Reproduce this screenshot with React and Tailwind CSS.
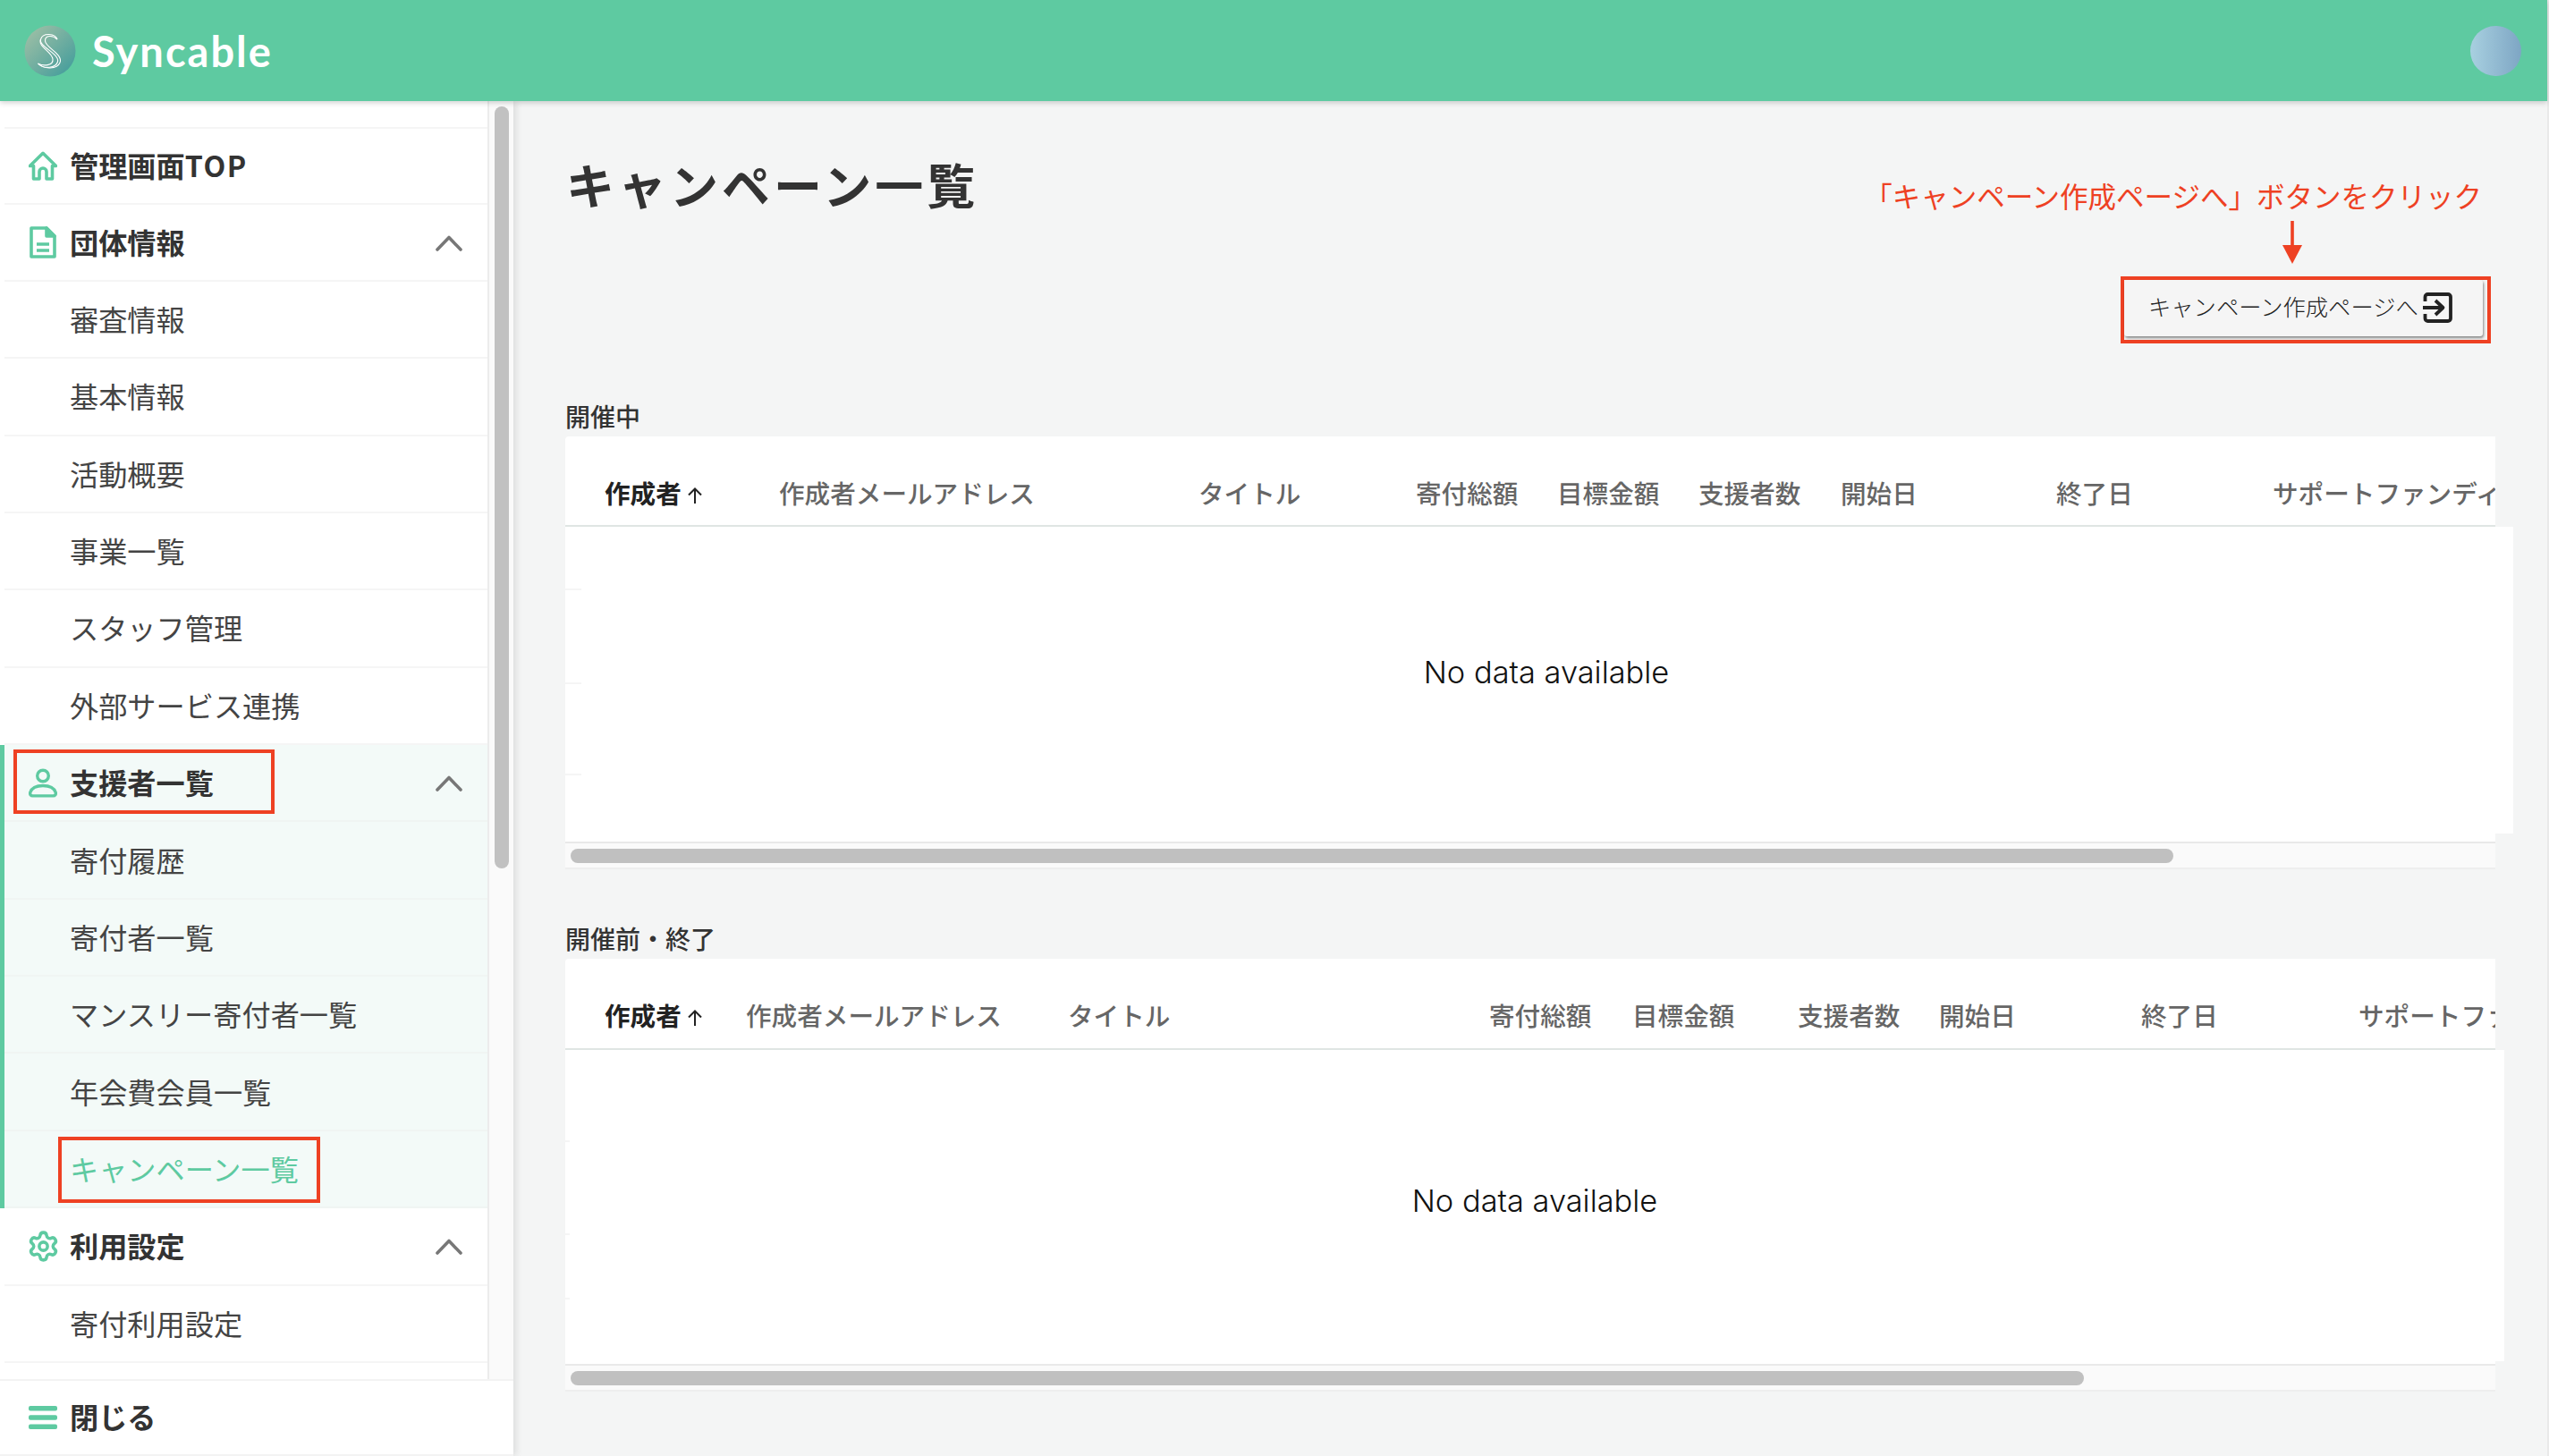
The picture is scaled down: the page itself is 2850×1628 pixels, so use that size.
import React from "react";
import { Settings } from "lucide-react";

const G = "#5ecaa1";

function Chevron() {
  return (
    <svg width="30" height="18" viewBox="0 0 30 18" fill="none" stroke="#777" strokeWidth="3.6" strokeLinecap="round" strokeLinejoin="round">
      <polyline points="2,16 15,2.5 28,16" />
    </svg>
  );
}
function HomeIcon() {
  return (
    <svg width="33" height="33" viewBox="0 0 32 32" fill="none" stroke={G} strokeWidth="3.6" strokeLinejoin="round">
      <path d="M1.5 16 L16 1.8 L30.5 16 H26.5 V30.5 H20 V22.5 A4 4 0 0 0 12 22.5 V30.5 H5.5 V16 Z" />
    </svg>
  );
}
function DocIcon() {
  return (
    <svg width="30" height="36" viewBox="0 0 30 36" fill="none" stroke={G} strokeWidth="3.6" strokeLinejoin="round">
      <path d="M2 2 H19 L28 11 V34 H2 Z" />
      <path d="M19 2 V11 H28 Z" fill={G} />
      <path d="M8 20 H22 M8 27 H22" strokeWidth="3.6" />
    </svg>
  );
}
function PersonIcon() {
  return (
    <svg width="33" height="33" viewBox="0 0 32 32" fill="none" stroke={G} strokeWidth="3.4">
      <circle cx="16" cy="8" r="6.3" />
      <path d="M1.8 26.5 C3.5 21.5 9 19 16 19 C23 19 28.5 21.5 30.2 26.5 C30.8 28.6 29.6 30.4 27.5 30.4 H4.5 C2.4 30.4 1.2 28.6 1.8 26.5 Z" />
    </svg>
  );
}
function MenuIcon() {
  return (
    <svg width="32" height="26" viewBox="0 0 32 26" fill={G}>
      <rect x="0" y="0" width="32" height="5.4" rx="2" />
      <rect x="0" y="10.3" width="32" height="5.4" rx="2" />
      <rect x="0" y="20.6" width="32" height="5.4" rx="2" />
    </svg>
  );
}
function EnterIcon() {
  return (
    <svg width="34" height="34" viewBox="0 0 34 34" fill="none" stroke="#222" strokeWidth="3.8" strokeLinejoin="round">
      <path d="M3.5 10 V5 A3 3 0 0 1 6.5 2 H29 A3 3 0 0 1 32 5 V29 A3 3 0 0 1 29 32 H6.5 A3 3 0 0 1 3.5 29 V24" />
      <path d="M1 17 H23 M15 9 L23.5 17 L15 25" />
    </svg>
  );
}
function SortArrow() {
  return (
    <svg width="20" height="20" viewBox="0 0 20 20" fill="none" stroke="#222" strokeWidth="2">
      <path d="M10 19 V2.5 M3 9.5 L10 2.5 L17 9.5" />
    </svg>
  );
}
function DownArrow() {
  return (
    <svg width="24" height="48" viewBox="0 0 24 48" fill="#ee4123">
      <rect x="10.2" y="0" width="3.6" height="30" />
      <polygon points="1,27 23,27 12,48" />
    </svg>
  );
}
function Logo() {
  return (
    <svg width="58" height="58" viewBox="0 0 58 58" fill="none">
      <defs>
        <linearGradient id="lg" x1="0" y1="0" x2="1" y2="1">
          <stop offset="0%" stopColor="#a6c2a6" />
          <stop offset="100%" stopColor="#3c9a9b" />
        </linearGradient>
      </defs>
      <circle cx="29" cy="29" r="28.5" fill="url(#lg)" />
      <path d="M37 16 C35 9.5 21 8 18.5 16 C16 24 40 32 37.5 41 C35.5 48 22 50 15.5 43" stroke="#fff" strokeWidth="1.1" />
      <path d="M37 16 C32 11 23 11 23.5 18 C24 25 44 33 40 42 C37 49.5 22 50 15.5 43 C21 46 33 46 32 38 C31 30 15 24 18.5 16" stroke="#fff" strokeWidth="1.1" />
    </svg>
  );
}

function Row({ label, icon, chevron, active, bold, current, first, box }) {
  const tone = current ? "text-[#5ecaa1]" : bold ? "font-semibold text-[#333]" : "text-[#444]";
  return (
    <div className={`flex ${first ? "h-[84.5px]" : "h-[86.36px]"} border-l-[5px] ${active ? "border-[#5ecaa1]" : "border-white"}`}>
      <div className={`relative flex flex-1 items-center justify-between border-b-2 pr-[28px] ${active ? "bg-[#f3faf8] border-[#f0f5f3]" : "bg-white border-[#f5f5f5]"}`}>
        <div className="flex items-center pl-[27px]">
          <div className="flex w-[32px] justify-center">{icon}</div>
          <span className={`mb-[2px] ml-[14px] text-[32.2px] leading-[40px] ${tone}`}>{label}</span>
        </div>
        <div className="mt-[2px] flex">{chevron && <Chevron />}</div>
        {box}
      </div>
    </div>
  );
}

function Sidebar() {
  return (
    <aside className="z-[1] flex w-[574px] shrink-0 flex-col bg-white shadow-[3px_0_8px_rgba(0,0,0,0.1)]">
      <div className="flex min-h-0 flex-1 overflow-hidden">
        <nav className="w-[545px] shrink-0">
          <div className="ml-[5px] h-[31px] border-b-2 border-[#f5f5f5]" />
          <Row first bold label={<>管理画面<span className="tracking-[1.6px]">TOP</span></>} icon={<HomeIcon />} />
          <Row bold chevron label="団体情報" icon={<DocIcon />} />
          <Row label="審査情報" />
          <Row label="基本情報" />
          <Row label="活動概要" />
          <Row label="事業一覧" />
          <Row label="スタッフ管理" />
          <Row label="外部サービス連携" />
          <Row
            active
            bold
            chevron
            label="支援者一覧"
            icon={<PersonIcon />}
            box={<div className="absolute left-[10px] top-[5px] h-[72px] w-[292px] border-4 border-[#ee4123]" />}
          />
          <Row active label="寄付履歴" />
          <Row active label="寄付者一覧" />
          <Row active label="マンスリー寄付者一覧" />
          <Row active label="年会費会員一覧" />
          <Row
            active
            current
            label="キャンペーン一覧"
            box={<div className="absolute left-[60px] top-[6px] h-[74px] w-[293px] border-4 border-[#ee4123]" />}
          />
          <Row bold chevron label="利用設定" icon={<Settings size={37} color={G} strokeWidth={2.3} className="shrink-0" />} />
          <Row label="寄付利用設定" />
        </nav>
        <div className="flex-1 border-l-2 border-[#ececec] bg-[#fafafa] pl-[6px] pt-[6px]">
          <div className="h-[852px] w-[16px] rounded-full bg-[#c1c1c1]" />
        </div>
      </div>
      <div className="flex h-[86px] items-center border-y-2 border-[#f3f3f3] bg-white pl-[32px]">
        <div className="flex w-[32px] justify-center"><MenuIcon /></div>
        <span className="mb-[5px] ml-[14px] text-[32.2px] font-semibold leading-[40px] text-[#333]">閉じる</span>
      </div>
    </aside>
  );
}

function DataTable({ title, cols, headH, bodyH, bodyW, bodyPad, footPt, thumbW, ticks, titleMt }) {
  return (
    <section className={titleMt}>
      <h2 className="mb-[9px] text-[28px] font-medium leading-[28px] text-[#333]">{title}</h2>
      <div className={`flex w-[2158px] items-end overflow-hidden rounded-tl-[4px] border-b-2 border-[#dfe5e3] bg-white pl-[44px] ${headH}`}>
        {cols.map((c, i) => (
          <div key={i} className={`flex shrink-0 items-center whitespace-nowrap text-[28.6px] leading-[40px] ${c.w} ${i === 0 ? "font-semibold text-[#222]" : "font-medium text-[#666]"}`}>
            {c.t}
            {i === 0 && <span className="ml-[5px] mt-[5px] flex"><SortArrow /></span>}
          </div>
        ))}
      </div>
      <div className={`relative flex items-center justify-center bg-white font-['Inter',sans-serif] text-[34.4px] font-light leading-[40px] text-[#111] ${bodyH} ${bodyW} ${bodyPad}`}>
        No data available
        {ticks.map((c, i) => <div key={i} className={`absolute left-0 h-[2px] bg-[#f5f5f5] ${c}`} />)}
      </div>
      <div className={`w-[2158px] bg-white ${footPt}`}>
        <div className="border-y-2 border-t-[#e9e9e9] border-b-[#eeeeee] bg-[#fafafa] pb-[5px] pl-[6px] pt-[6px]">
          <div className={`h-[16px] rounded-full bg-[#c0c0c0] ${thumbW}`} />
        </div>
      </div>
    </section>
  );
}

const cols1 = [
  { t: "作成者", w: "w-[195px]" },
  { t: "作成者メールアドレス", w: "w-[469px]" },
  { t: "タイトル", w: "w-[243px]" },
  { t: "寄付総額", w: "w-[158px]" },
  { t: "目標金額", w: "w-[158px]" },
  { t: "支援者数", w: "w-[159px]" },
  { t: "開始日", w: "w-[241px]" },
  { t: "終了日", w: "w-[242px]" },
  { t: "サポートファンディング", w: "w-[400px]" },
];
const cols2 = [
  { t: "作成者", w: "w-[158px]" },
  { t: "作成者メールアドレス", w: "w-[360px]" },
  { t: "タイトル", w: "w-[471px]" },
  { t: "寄付総額", w: "w-[160px]" },
  { t: "目標金額", w: "w-[185px]" },
  { t: "支援者数", w: "w-[158px]" },
  { t: "開始日", w: "w-[226px]" },
  { t: "終了日", w: "w-[243px]" },
  { t: "サポートファンディング", w: "w-[400px]" },
];

export default function App() {
  return (
    <div className="flex h-[1628px] w-[2850px] overflow-hidden bg-[#e9e9e9] font-['Noto_Sans_CJK_JP','Noto_Sans',sans-serif]">
      <div className="flex w-[2848px] flex-col bg-[#f4f5f5]">
        <header className="z-10 flex h-[113px] shrink-0 items-center justify-between bg-[#5ecaa1] pl-[27px] pr-[29px] shadow-[0_2px_6px_rgba(0,0,0,0.18)]">
          <div className="flex items-center">
            <Logo />
            <span className="ml-[18px] font-['Lato',sans-serif] text-[47px] font-bold leading-[56px] tracking-[2px] text-white">Syncable</span>
          </div>
          <div className="h-[56px] w-[57px] rounded-full bg-gradient-to-r from-[#a8d0e0] to-[#7ea6c4]" />
        </header>
        <div className="flex min-h-0 flex-1">
          <Sidebar />
          <main className="min-w-0 flex-1 pl-[58px]">
            <div className="flex h-[338px] justify-between">
              <h1 className="pl-[1px] pt-[64px] text-[54px] font-bold leading-[58px] tracking-[4px] text-[#333]">キャンペーン一覧</h1>
              <div className="flex flex-col items-end pr-[63px] pt-[85px]">
                <p className="mr-[10px] text-[31.5px] leading-[40px] text-[#ee4123]">「キャンペーン作成ページへ」ボタンをクリック</p>
                <div className="mr-[210px] mt-[9px] flex"><DownArrow /></div>
                <div className="mt-[14px] h-[75px] w-[414px] border-4 border-[#ee4123]">
                  <button className="flex h-[63px] w-[401px] items-center rounded-[3px] bg-[#f5f5f5] pb-[2px] pl-[27px] text-[25.3px] font-light leading-[32px] text-[#222] shadow-[1px_2px_3px_rgba(0,0,0,0.45)]">
                    <span className="mb-[3px]">キャンペーン作成ページへ</span>
                    <span className="ml-[4px] flex"><EnterIcon /></span>
                  </button>
                </div>
              </div>
            </div>
            <DataTable
              title="開催中"
              cols={cols1}
              headH="h-[101px] pb-[16px]"
              bodyH="h-[343px]"
              bodyW="w-[2178px]"
              bodyPad="pb-[17px] pl-[16px]"
              footPt="pt-[9px]"
              thumbW="w-[1792px]"
              ticks={["top-[69px] w-[18px]", "top-[174px] w-[18px]", "top-[276px] w-[18px]"]}
            />
            <DataTable
              title="開催前・終了"
              titleMt="mt-[63px]"
              cols={cols2}
              headH="h-[102px] pb-[17px]"
              bodyH="h-[348px]"
              bodyW="w-[2168px]"
              bodyPad="pb-[11px]"
              footPt="pt-[3px]"
              thumbW="w-[1692px]"
              ticks={["top-[101px] w-[5px]", "top-[205px] w-[5px]", "top-[277px] w-[5px]"]}
            />
          </main>
        </div>
      </div>
    </div>
  );
}
